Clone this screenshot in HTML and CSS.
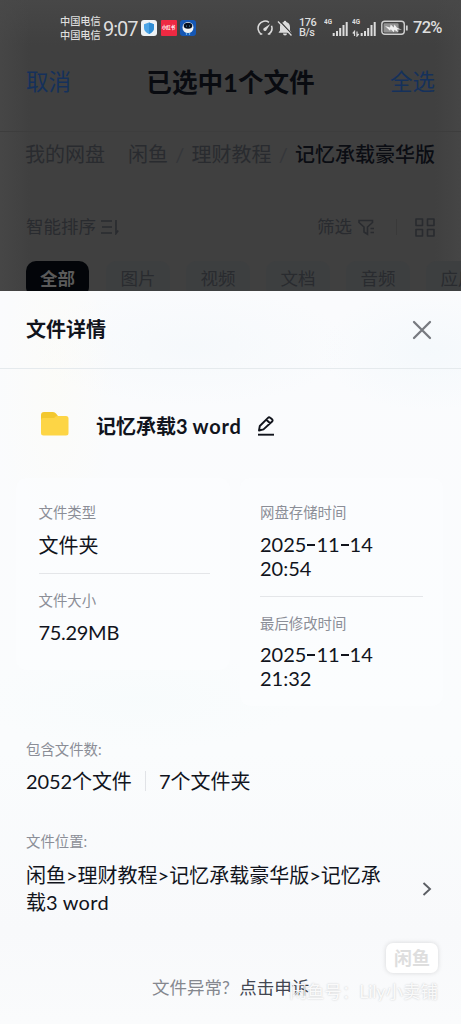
FILE: index.html
```html
<!DOCTYPE html>
<html lang="zh-CN">
<head>
<meta charset="utf-8">
<title>文件详情</title>
<link rel="stylesheet" href="styles.css">
</head>
<body>
<div class="screen">
  <div class="backdrop">
    <div class="status">
      <div class="carriers"><span>中国电信</span><span>中国电信</span></div>
      <span class="clock">9:07</span>
      <svg class="app" viewBox="0 0 16 16"><rect width="16" height="16" rx="3" fill="#eef2f5"/><path d="M8 2.500 13 4.200V8c0 2.800-2.200 4.800-5 5.900C5.200 12.800 3 10.800 3 8V4.200Z" fill="#4ba4e6"/><path d="M8 2.500 13 4.200V8c0 2.800-2.200 4.800-5 5.900Z" fill="#2f8dd5"/></svg>
      <span class="app red">小红书</span>
      <svg class="app" viewBox="0 0 16 16"><rect width="16" height="16" rx="3" fill="#1557b4"/><circle cx="8" cy="7.500" r="5.500" fill="#eef2f5"/><ellipse cx="8" cy="5.800" rx="4.300" ry="3" fill="#07101f"/><circle cx="6.500" cy="6" r=".5" fill="#6cc0f0"/><circle cx="9.500" cy="6" r=".5" fill="#6cc0f0"/><path d="M6.500 13v2M9.500 13v2" stroke="#5ba9e4" stroke-width="1.200"/></svg>
      <div class="indicators">
        <svg class="gauge" viewBox="0 0 16 16" width="16" height="16"><path d="M4.200 14A7 7 0 1 1 12 2.300M14.500 5.800a7 7 0 0 1-2.700 8.200M2.800 14h2.500M10.800 14h2.500" fill="none" stroke="#dcdcdc" stroke-width="1.500"/><path d="m13.300 3.900-3.700 5.800a1.700 1.700 0 1 1-2.100-2Z" fill="#dcdcdc"/></svg>
        <svg class="bell" viewBox="0 0 16 16" width="16" height="16"><path d="M8 .8a1.300 1.300 0 0 1 1.300 1.300C11.700 2.700 13 4.500 13 7v3.500l1.500 2.200h-13L3 10.500V7c0-2.500 1.300-4.300 3.700-4.900A1.300 1.300 0 0 1 8 .8ZM6 13.500h4a2 2 0 0 1-4 0Z" fill="#dcdcdc"/><path d="m2.400.8 13 13.800" stroke="#404040" stroke-width="1.300"/><path d="m1 1.500 13.500 14" stroke="#dcdcdc" stroke-width="1.300"/></svg>
        <div class="speed"><span>176</span><span>B/s</span></div>
        <div class="cell"><span>4G</span><svg viewBox="0 0 16 16" width="16" height="16"><path d="M1.700 15v-3M5 15v-5M8.200 15V7M11.500 15V4M14.700 15V1" stroke="#dcdcdc" stroke-width="2"/></svg></div>
        <div class="cell second"><span>4G</span><svg viewBox="0 0 24 16" width="24" height="16"><path d="M9.700 15v-3M13 15v-5M16.200 15V7M19.500 15V4M22.700 15V1" stroke="#dcdcdc" stroke-width="2"/><path d="M2.500 15v-4.500L.8 12.500M5 10.500V15l1.700-2" fill="none" stroke="#dcdcdc" stroke-width="1.200"/></svg></div>
        <svg class="battery" viewBox="0 0 27 16" width="27" height="16"><rect x=".8" y="1.300" width="22.500" height="13" rx="3" fill="none" stroke="#cfcfcf" stroke-width="1.400"/><rect x="2.600" y="3.200" width="15" height="9.200" rx="1.200" fill="#929292"/><path d="M4 6 9 7.500l.7-3 3 3 .7-3 2.600 3.200 5 2-5-.4 1 3-3.600-2.600-.6 2.600-3-3-.8 1.400Z" fill="#f0f0f0"/><path d="M25.800 5.500v5" stroke="#cfcfcf" stroke-width="1.800"/></svg>
        <span class="percent">72%</span>
      </div>
    </div>
    <div class="topbar"><span class="action">取消</span><span class="title">已选中1个文件</span><span class="action">全选</span></div>
    <div class="crumbs"><span>我的网盘</span><span class="fish">闲鱼</span><i>/</i><span>理财教程</span><i>/</i><span class="current">记忆承载豪华版</span></div>
    <div class="tools">
      <span>智能排序</span>
      <svg width="18" height="16" viewBox="0 0 18 16"><path d="M0 2h11M1 8h10M0 14h11M15 1v13.500l2.200-3" fill="none" stroke="#292b2f" stroke-width="1.600"/></svg>
      <span class="filter">筛选</span>
      <svg width="18" height="17" viewBox="0 0 18 17"><path d="M1 1.500h13.500v2L9.500 8v7.200L6 13V8L1 3.500ZM12.500 9.500H16M12.500 13.500H16" fill="none" stroke="#292b2f" stroke-width="1.600"/></svg>
      <b></b>
      <svg width="20" height="19" viewBox="0 0 20 19"><path d="M1 1h6.500v6.500H1ZM12.500 1H19v6.500h-6.500ZM1 11.500h6.500V18H1ZM12.500 11.500H19V18h-6.500Z" fill="none" stroke="#292b2f" stroke-width="1.600" stroke-linejoin="round"/></svg>
    </div>
    <div class="chips"><span class="on">全部</span><span>图片</span><span>视频</span><span>文档</span><span>音频</span><span>应用</span></div>
  </div>

  <div class="sheet">
    <div class="sheet-head"><h1>文件详情</h1><svg width="20" height="20" viewBox="0 0 20 20"><path d="m2 2 16 16M18 2 2 18" stroke="#777a80" stroke-width="2.300" stroke-linecap="round"/></svg></div>
    <div class="name">
      <svg class="folder" width="28" height="24" viewBox="0 0 28 24"><path d="M0 3Q0 0 3 0h9q2 0 3 1.500L17 4v5H0Z" fill="#f3c82f"/><path d="M0 8q0-2 2-2h11l2-1.700Q16 4 17 4h8q2.500 0 2.500 2.500V21q0 2.500-2.500 2.500H2.500Q0 23.500 0 21Z" fill="#fdd545"/></svg>
      <h2>记忆承载3 <em>word</em></h2>
      <svg width="18" height="20" viewBox="0 0 18 20"><path d="M1 18.700h16" stroke="#11141c" stroke-width="1.900"/><path d="m2 14.500.8-4.500L11 1.800q1-1 2.200 0l1.900 1.500q1 1.100 0 2.200L6.500 13.400ZM9.300 3.700l3.800 3.500" fill="none" stroke="#11141c" stroke-width="1.900" stroke-linejoin="round"/></svg>
    </div>
    <div class="cards">
      <div class="card left">
        <div class="label">文件类型</div><div class="value">文件夹</div>
        <hr>
        <div class="label">文件大小</div><div class="value size">75.29MB</div>
      </div>
      <div class="card right">
        <div class="label">网盘存储时间</div><div class="value date">2025<s></s>11<s></s>14<br>20:54</div>
        <hr>
        <div class="label">最后修改时间</div><div class="value date">2025<s></s>11<s></s>14<br>21:32</div>
      </div>
    </div>
    <div class="section count"><div class="label">包含文件数:</div><div class="counts"><span>2052个文件</span><b></b><span>7个文件夹</span></div></div>
    <div class="section place"><div class="label">文件位置:</div>
      <div class="path"><p>闲鱼&gt;理财教程&gt;记忆承载豪华版&gt;记忆承<br>载3 <em>word</em></p><svg width="10" height="14" viewBox="0 0 10 14"><path d="m1.500 1 6.500 6-6.500 6" fill="none" stroke="#5b5e64" stroke-width="1.900"/></svg></div>
    </div>
    <div class="appeal">文件异常? <a>点击申诉</a></div>
  </div>
  <div class="badge">闲鱼</div>
  <div class="watermark">闲鱼号：Lily小卖铺</div>
</div>
</body>
</html>
```

FILE: styles.css
```css
* { box-sizing: border-box; }
body { margin: 0; font-family: Lato, "Noto Sans CJK SC", sans-serif; }
h1, h2, p { margin: 0; font-size: 20px; }
em, i { font-style: normal; }
svg { flex: none; display: block; }
.screen { position: relative; width: 461px; height: 1024px; overflow: hidden; }

.backdrop { height: 291px; overflow: hidden; background: linear-gradient(90deg, rgba(73,73,73,.7), rgba(64,64,64,0) 30px, rgba(64,64,64,0) 435px, rgba(73,73,73,.6)), linear-gradient(#474747, #404040 45px); white-space: nowrap; }
.status { display: flex; align-items: center; height: 56px; padding: 0 18px 0 60px; color: #dedede; }
.carriers { display: flex; flex-direction: column; font-size: 10.2px; line-height: 14px; font-weight: 500; width: 43px; padding-bottom: 1px; }
.clock { font: 20px/24px Roboto, sans-serif; width: 38px; letter-spacing: -1px; padding-top: 1px; }
.app { width: 16px; height: 16px; margin-right: 3.5px; flex: none; }
.red { background: #ee2942; border-radius: 1px; color: #fff; font-size: 4.4px; line-height: 16px; text-align: center; font-weight: 700; }
.indicators { display: flex; align-items: center; margin-left: auto; }
.bell { margin: 0 6px 0 4px; }
.speed { width: 18px; display: flex; flex-direction: column; font: 500 11px/10.500px Roboto, sans-serif; letter-spacing: -.5px; }
.cell { display: flex; height: 20px; align-items: flex-end; margin-left: 7px; padding-bottom: 1px; }
.cell span { font: 700 7.5px/8px Roboto, sans-serif; align-self: flex-start; width: 8px; transform: scaleX(.85); transform-origin: left; }
.cell.second { margin-left: 4px; width: 24px; }
.cell.second span { width: 0; }
.battery { margin: 0 5px; }
.percent { font: 500 16.5px/20px Roboto, sans-serif; width: 30px; letter-spacing: -.7px; }

.topbar { display: flex; justify-content: space-between; align-items: center; height: 75px; padding: 0 26px 23px; }
.action { color: #15315b; font-size: 22.5px; line-height: 30px; }
.title { font-size: 25.6px; line-height: 30px; font-weight: 700; color: #090b10; }
.crumbs { display: flex; align-items: center; height: 56px; padding: 0 25px 12px; border-top: 1px solid #3d3d3d; font-size: 20px; line-height: 28px; color: #292b2f; }
.crumbs .fish { margin-left: 23px; }
.crumbs i { width: 23.5px; text-align: center; color: #34363a; }
.crumbs .current { color: #0b0d13; font-weight: 500; }
.tools { display: flex; align-items: center; height: 74px; padding: 6px 26px 0; font-size: 17.5px; line-height: 24px; color: #292b2f; }
.tools span:first-child { width: 75px; }
.tools .filter { margin-left: auto; width: 41px; }
.tools b { height: 16px; width: 1px; background: #393939; margin: 0 18px 0 20px; }
.chips { display: flex; gap: 16px; padding-left: 26px; }
.chips span { flex: none; width: 64px; height: 36px; padding-left: 14.5px; border-radius: 10px; font-size: 17.5px; line-height: 35px; color: #292b2f; background: #3d3f40; }
.chips .on { width: 63px; padding-left: 14px; color: #5a5a5a; background: #030509; font-weight: 700; margin-right: 1px; }

.sheet { height: 733px; color: #11141c;
  background: radial-gradient(ellipse 60px 190px at 55px 90px, rgba(253,252,244,.5), transparent), radial-gradient(ellipse 110px 60px at 430px 60px, rgba(240,247,251,.55), transparent), radial-gradient(ellipse 160px 60px at 190px 55px, rgba(244,248,251,.7), transparent), radial-gradient(ellipse 160px 50px at 140px 410px, rgba(246,251,252,.6), transparent), linear-gradient(#fafbfd, #fafcfd 460px, #f8f9fb 640px, #fafbfc); }
.sheet-head { display: flex; align-items: center; justify-content: space-between; height: 78px; padding: 0 29px 0 26px; border-bottom: 1px solid #e5eaed; }
.sheet-head h1 { font-weight: 700; line-height: 28px; padding-bottom: 1px; }
.name { display: flex; align-items: center; height: 109px; padding: 5px 0 0 41px; }
.folder { margin: -5px 27px 0 0; }
.name h2 { width: 161px; line-height: 28px; font-weight: 700; white-space: nowrap; }
.name em { letter-spacing: .8px; }
.cards { display: flex; gap: 10px; padding-left: 16px; align-items: flex-start; height: 260px; }
.card { border-radius: 10px; background: rgba(251,252,254,.8); }
.left { width: 214px; height: 192px; padding: 23px 20px 0 22.5px; }
.right { width: 203px; height: 228px; padding: 23px 20px 0 20px; }
.card hr { border: 0; height: 1px; background: #e4e6e9; margin: 14px 0 15px; }
.label { font-size: 14.4px; line-height: 24px; color: #8b8e97; }
.value { font-size: 20px; line-height: 24px; padding-top: 8px; margin-bottom: 16px; }
.size { letter-spacing: -.3px; padding-top: 7px; }
.right .date { line-height: 23.5px; padding-top: 8px; }
.date s { display: inline-block; width: 8px; height: 1.7px; background: #11141c; margin: 0 1px; vertical-align: 6px; }
.right hr ~ .date { padding-top: 7px; }
.section { padding-left: 26px; }
.count { height: 92px; }
.counts { display: flex; align-items: center; font-size: 20px; line-height: 28px; padding-top: 5px; white-space: nowrap; }
.counts span:first-child { width: 119px; letter-spacing: -.1px; }
.counts b { width: 1px; height: 20px; background: #e1e3e7; margin-right: 13px; }
.path { display: flex; align-items: center; padding-top: 8px; }
.path p { width: 396px; font-size: 20px; line-height: 27px; font-weight: 400; white-space: nowrap; }
.path em { letter-spacing: .3px; }
.appeal { font-size: 17.5px; line-height: 24px; color: #85888f; padding: 60px 0 0 152px; white-space: nowrap; }
.appeal a { margin-left: 5px; color: #424650; }
.badge { position: absolute; left: 386px; top: 943px; width: 52px; height: 30px; border-radius: 7px; background: #fff; box-shadow: 0 0 5px rgba(0,0,0,.14); color: #dedede; font: 700 18px/29px "Noto Sans CJK SC", sans-serif; text-align: center; }
.watermark { position: absolute; right: 23px; top: 980px; font-size: 17.5px; line-height: 24px; color: rgba(255,255,255,.9); text-shadow: 0 0 2px rgba(0,0,0,.22); white-space: nowrap; }
```
